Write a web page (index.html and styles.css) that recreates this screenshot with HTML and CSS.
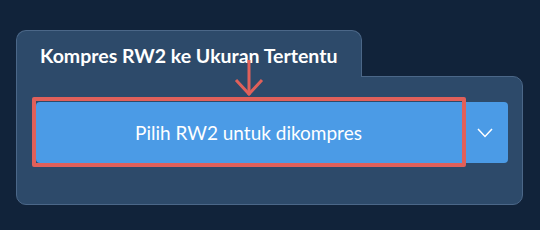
FILE: index.html
```html
<!DOCTYPE html>
<html lang="id">
  <head>
    <meta charset="UTF-8" />
    <meta name="viewport" content="width=device-width, initial-scale=1.0" />
    <title>Kompres RW2</title>
    <link rel="stylesheet" href="styles.css">
  </head>
  <body>
    <div class="card">
      <!-- tab judul -->
      <div class="card-tab">Kompres RW2 ke Ukuran Tertentu</div>

      <!-- panel tombol -->
      <div class="card-body">
        <div class="upload-btn">
          <button type="button" class="upload-main">
            Pilih RW2 untuk dikompres
            <span class="highlight"></span>
          </button>
          <button type="button" class="upload-more" aria-label="Lainnya">
            <svg width="16" height="10" viewBox="0 0 16 10">
              <polyline points="1,1 8,8.5 15,1" fill="none" stroke="#fff" stroke-width="1.5" />
            </svg>
          </button>
        </div>
      </div>

      <svg class="pointer" width="34" height="44" viewBox="0 0 34 44">
        <line x1="17" y1="4" x2="17" y2="39" stroke="#e0605a" stroke-width="3" />
        <polyline points="4,24 17,38 30,24" fill="none" stroke="#e0605a" stroke-width="3" />
      </svg>
    </div>
  </body>
</html>
```

FILE: styles.css
```css
* {
  padding: 0;
  margin: 0;
  box-sizing: border-box;
}
body {
  background-color: #11233a;
  font-family: Lato, "Noto Sans", sans-serif;
  padding: 30px 0 0 16px;
}
button {
  border: none;
  background: none;
  font-family: inherit;
  cursor: pointer;
}

.card {
  position: relative;
  width: 507px;
}
.card-tab {
  position: relative;
  z-index: 1;
  width: 346px;
  height: 47px;
  margin-bottom: -1px;
  padding: 15px 0 0 23px;
  background-color: #2d4a6a;
  border: 1px solid #4b6788;
  border-bottom: none;
  border-radius: 10px 10px 0 0;
  color: #fff;
  font-size: 19.5px;
  font-weight: 700;
  line-height: 20px;
  white-space: nowrap;
}
.card-body {
  height: 129px;
  padding: 25px 14px 0 19px;
  background-color: #2d4a6a;
  border: 1px solid #4b6788;
  border-radius: 0 10px 10px 10px;
}

.upload-btn {
  display: flex;
  height: 61px;
  background-color: #4b9be6;
  border-radius: 4px;
}
.upload-main {
  position: relative;
  width: 425px;
  height: 100%;
  color: #fff;
  font-size: 19px;
  font-weight: 400;
}
.upload-more {
  flex: 1;
  display: flex;
  align-items: center;
  justify-content: center;
  padding-top: 1px;
}

.highlight {
  position: absolute;
  left: -4px;
  top: -5px;
  width: 434px;
  height: 70px;
  border: 4px solid #e0605a;
  border-radius: 2px;
}
.pointer {
  position: absolute;
  left: 216px;
  top: 26px;
  z-index: 2;
}
```
